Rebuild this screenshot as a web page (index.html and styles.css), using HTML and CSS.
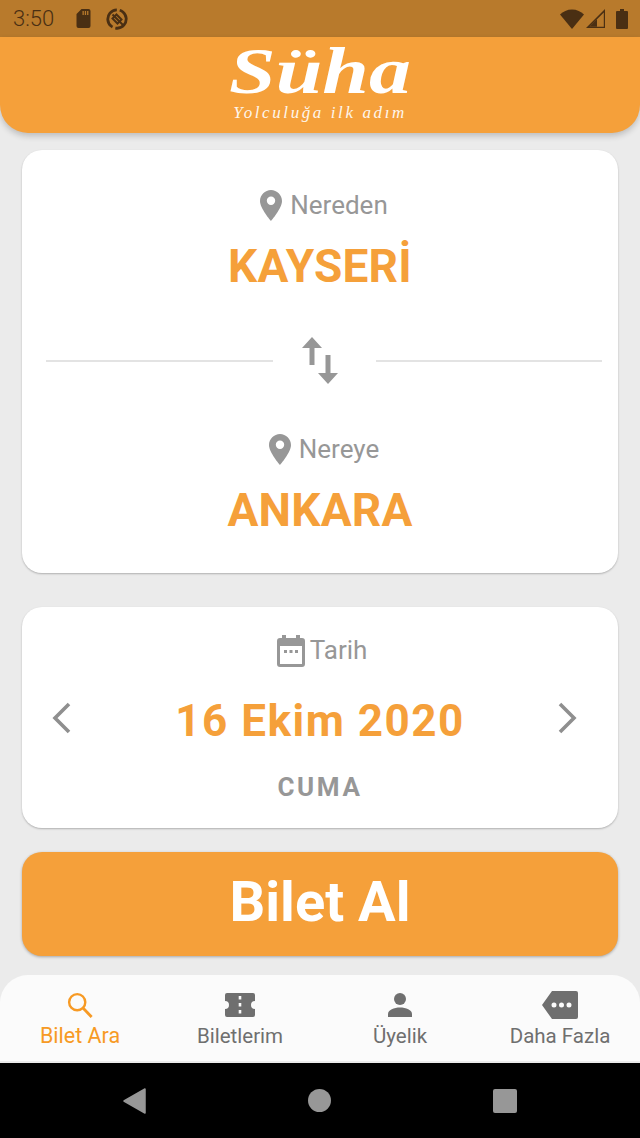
FILE: index.html
```html
<!DOCTYPE html>
<html lang="en">
<head>
    <meta charset="UTF-8">
    <meta name="viewport" content="width=device-width, initial-scale=1.0">
    <title>Süha</title>
    <link rel="stylesheet" href="styles.css">
</head>
<body>
<div class="screen">
    <!-- Status bar -->
    <div class="status-bar">
        <span class="status-time">3:50</span>
        <svg class="status-icon sd" viewBox="0 0 14 19"><path d="M5 0h7a2 2 0 0 1 2 2v15a2 2 0 0 1-2 2H2a2 2 0 0 1-2-2V5zM6 2v4h1.300V2zM8.300 2v4h1.300V2zM10.600 2v4h1.300V2z" fill-rule="evenodd"/></svg>
        <svg class="status-icon nosync" viewBox="0 0 22 22"><circle cx="11" cy="11" r="9.200" fill="none" stroke="#4a2f13" stroke-width="2.800" stroke-dasharray="24 2.900" transform="rotate(-50 11 11)"/><path d="M10.500 6.500 15.500 11.500 11.500 15.500 6.500 10.500z" fill="none" stroke="#4a2f13" stroke-width="2"/><path d="M6.500 6.500 18 18" stroke="#4a2f13" stroke-width="2"/></svg>
        <span class="status-spacer"></span>
        <svg class="status-icon wifi" viewBox="0 0 24 20"><path d="M0 5.500C3 2.500 7.200.500 12 .500s9 2 12 5L12 20z"/></svg>
        <svg class="status-icon signal" viewBox="0 0 19 19"><path d="M0 19 19 0v19zM3.500 17.800H17.800V3.600z" fill-rule="evenodd"/><path d="M3.500 17.800H11V10.300z"/></svg>
        <svg class="status-icon battery" viewBox="0 0 12 20"><path d="M4 0h4v2h3a1 1 0 0 1 1 1v16a1 1 0 0 1-1 1H1a1 1 0 0 1-1-1V3a1 1 0 0 1 1-1h3z"/></svg>
    </div>

    <!-- Orange header with logo -->
    <header class="app-header">
        <div class="logo-name">Süha</div>
        <div class="logo-tag">Yolculuğa ilk adım</div>
    </header>

    <main class="content">
        <section class="card route-card">
            <div class="field-label">
                <svg class="pin" viewBox="0 0 22 31"><path d="M11 0C5 0 0 5 0 11c0 7.500 11 20 11 20s11-12.500 11-20C22 5 17 0 11 0zm0 15a4.200 4.200 0 1 1 0-8.400 4.200 4.200 0 0 1 0 8.400z" fill-rule="evenodd"/></svg>
                <span>Nereden</span>
            </div>
            <div class="city">KAYSERİ</div>
            <div class="swap-row">
                <span class="rule"></span>
                <svg class="swap" viewBox="0 0 36 47"><path d="M10 0 20 11h-7.500v17h-5V11H0zM23.500 18h5v18H36L26 47 16 36h7.500z"/></svg>
                <span class="rule"></span>
            </div>
            <div class="field-label">
                <svg class="pin" viewBox="0 0 22 31"><path d="M11 0C5 0 0 5 0 11c0 7.500 11 20 11 20s11-12.500 11-20C22 5 17 0 11 0zm0 15a4.200 4.200 0 1 1 0-8.400 4.200 4.200 0 0 1 0 8.400z" fill-rule="evenodd"/></svg>
                <span>Nereye</span>
            </div>
            <div class="city">ANKARA</div>
        </section>

        <section class="card date-card">
            <div class="field-label date-label">
                <svg class="calendar" viewBox="0 0 28 32"><path d="M5 0h4v3h10V0h4v3h2a3 3 0 0 1 3 3v23a3 3 0 0 1-3 3H3a3 3 0 0 1-3-3V6a3 3 0 0 1 3-3h2zM3 11v18h22V11zM7 15h3v3H7zM12.500 15h3v3h-3zM18 15h3v3h-3z" fill-rule="evenodd"/></svg>
                <span>Tarih</span>
            </div>
            <div class="date-row">
                <svg class="chevron chevron-prev" viewBox="0 0 20 32"><path d="M18 2 4 16l14 14" fill="none" stroke="#8f8f8f" stroke-width="3.600"/></svg>
                <span class="date-text">16 Ekim 2020</span>
                <svg class="chevron chevron-next" viewBox="0 0 20 32"><path d="M2 2l14 14L2 30" fill="none" stroke="#8f8f8f" stroke-width="3.600"/></svg>
            </div>
            <div class="weekday">CUMA</div>
        </section>

        <button class="buy-button">Bilet Al</button>
    </main>

    <!-- Bottom tabs -->
    <nav class="tabs">
        <div class="tab active">
            <svg class="tab-icon" viewBox="0 0 28 28"><circle cx="11" cy="11" r="8.700" fill="none" stroke="#f79a24" stroke-width="2.600"/><path d="M17.500 17.500 26.500 27" stroke="#f79a24" stroke-width="3"/></svg>
            <span>Bilet Ara</span>
        </div>
        <div class="tab">
            <svg class="tab-icon" viewBox="0 0 30 26"><path d="M2 1h26a2 2 0 0 1 2 2v6a4 4 0 0 0 0 8v6a2 2 0 0 1-2 2H2a2 2 0 0 1-2-2v-6a4 4 0 0 0 0-8V3a2 2 0 0 1 2-2zM13.700 4v3.500h2.600V4zM13.700 11v3.500h2.600V11zM13.700 18v3.500h2.600V18z" fill-rule="evenodd"/></svg>
            <span>Biletlerim</span>
        </div>
        <div class="tab">
            <svg class="tab-icon" viewBox="0 0 26 26"><circle cx="13" cy="7" r="6"/><path d="M1 25v-3c0-4 6-6.500 12-6.500S25 18 25 22v3z"/></svg>
            <span>Üyelik</span>
        </div>
        <div class="tab">
            <svg class="tab-icon tag" viewBox="0 0 36 28"><path d="M10 0h24a2 2 0 0 1 2 2v24a2 2 0 0 1-2 2H10L0 14zM12 11.500a2.500 2.500 0 1 0 0 5 2.500 2.500 0 0 0 0-5zM19.500 11.500a2.500 2.500 0 1 0 0 5 2.500 2.500 0 0 0 0-5zM27 11.500a2.500 2.500 0 1 0 0 5 2.500 2.500 0 0 0 0-5z" fill-rule="evenodd"/></svg>
            <span>Daha Fazla</span>
        </div>
    </nav>

    <!-- Android navigation bar -->
    <div class="system-nav">
        <svg class="sys-back" viewBox="0 0 23 26"><path d="M22 1v24L1 13z" stroke="#979797" stroke-width="1.500" stroke-linejoin="round"/></svg>
        <span class="sys-home"></span>
        <span class="sys-recent"></span>
    </div>
</div>
</body>
</html>
```

FILE: styles.css
```css
/* General */
* {
    box-sizing: border-box;
}

body {
    margin: 0;
    background: #ebebeb;
    font-family: Roboto, sans-serif;
}

.screen {
    width: 640px;
    height: 1138px;
    display: flex;
    flex-direction: column;
    overflow: hidden;
}

/* Status bar */
.status-bar {
    height: 37px;
    flex: none;
    background: #b87a2c;
    display: flex;
    align-items: center;
    padding: 0 12px 0 13px;
    color: #4a2f13;
}

.status-time {
    font-size: 22px;
    font-weight: 300;
    margin-right: 22px;
}

.status-icon {
    display: block;
    fill: #4a2f13;
}

.sd {
    width: 15px;
    height: 19px;
    margin-right: 15px;
}

.nosync {
    width: 22px;
    height: 22px;
    fill: none;
}

.status-spacer {
    flex: 1;
}

.wifi {
    width: 24px;
    height: 20px;
    margin-right: 2px;
}

.signal {
    width: 19px;
    height: 19px;
    margin-right: 11px;
}

.battery {
    width: 12px;
    height: 20px;
}

/* Header */
.app-header {
    height: 96px;
    flex: none;
    background: #f5a03a;
    border-radius: 0 0 28px 28px;
    box-shadow: 0 3px 6px rgba(0, 0, 0, 0.2);
    color: #fff;
    text-align: center;
    padding-top: 4px;
}

.logo-name {
    font-family: "Liberation Serif", serif;
    font-style: italic;
    font-weight: bold;
    font-size: 66px;
    line-height: 60px;
    height: 62px;
    transform: scaleX(1.27);
}

.logo-tag {
    font-family: "Liberation Serif", serif;
    font-style: italic;
    font-size: 17px;
    line-height: 20px;
    letter-spacing: 2.6px;
    opacity: 0.9;
}

/* Main content */
.content {
    flex: 1;
    padding: 17px 22px 0;
}

.card {
    background: #fff;
    border-radius: 20px;
    box-shadow: 0 1px 2px rgba(0, 0, 0, 0.25);
    text-align: center;
}

.route-card {
    height: 423px;
    padding: 39px 24px 0;
}

.field-label {
    display: flex;
    justify-content: center;
    align-items: center;
    gap: 8px;
    height: 32px;
    padding-left: 8px;
    font-size: 26px;
    color: #979797;
}

.pin {
    width: 22px;
    height: 31px;
    fill: #979797;
}

.city {
    margin-top: 19px;
    font-size: 46px;
    line-height: 52px;
    font-weight: bold;
    letter-spacing: 0.2px;
    color: #f5a03a;
}

.swap-row {
    display: flex;
    align-items: center;
    height: 47px;
    margin: 45px -8px 49px 0;
}

.rule {
    flex: 1;
    height: 2px;
    background: #e3e3e3;
}

.swap {
    width: 36px;
    height: 47px;
    margin: 0 38px 0 29px;
    fill: #979797;
}

.date-card {
    height: 221px;
    margin-top: 34px;
    padding: 28px 31px 0;
}

.date-label {
    gap: 5px;
    padding-left: 4px;
}

.date-label span {
    margin-bottom: 2px;
}

.calendar {
    width: 28px;
    height: 32px;
    fill: #979797;
}

.date-row {
    display: grid;
    grid-template-columns: 1fr auto 1fr;
    align-items: center;
    height: 62px;
    margin-top: 23px;
}

.chevron {
    width: 20px;
    height: 32px;
    margin-bottom: 6px;
}

.chevron-prev {
    margin-left: -2px;
}

.chevron-next {
    justify-self: end;
    margin-right: 9px;
}

.date-text {
    font-size: 44px;
    font-weight: bold;
    letter-spacing: 1.5px;
    color: #f5a03a;
}

.weekday {
    margin-top: 20px;
    font-size: 26px;
    line-height: 30px;
    font-weight: bold;
    letter-spacing: 2.6px;
    color: #979797;
}

.buy-button {
    display: block;
    width: 100%;
    height: 104px;
    margin-top: 24px;
    padding: 0 0 4px;
    border: none;
    border-radius: 20px;
    background: #f5a03a;
    box-shadow: 0 1px 3px rgba(0, 0, 0, 0.3);
    color: #fff;
    font-family: Roboto, sans-serif;
    font-size: 56px;
    font-weight: bold;
}

/* Bottom tabs */
.tabs {
    height: 86px;
    margin-bottom: 2px;
    flex: none;
    background: #fbfbfb;
    border-radius: 28px 28px 0 0;
    display: grid;
    grid-template-columns: repeat(4, 1fr);
}

.tab {
    display: flex;
    flex-direction: column;
    align-items: center;
    padding-top: 17px;
    font-size: 20.500px;
    line-height: 24px;
    color: #6f6f6f;
}

.tab.active {
    font-size: 21.500px;
    color: #f79a24;
}

.tab-icon {
    width: 30px;
    height: 26px;
    margin-bottom: 6px;
    fill: #6f6f6f;
}

.tag {
    width: 36px;
    height: 28px;
    margin: -1px 0 5px;
}

/* System navigation */
.system-nav {
    height: 75px;
    flex: none;
    background: #000;
    display: flex;
    justify-content: center;
    align-items: center;
    gap: 162px;
}

.sys-back {
    width: 23px;
    height: 26px;
    fill: #979797;
}

.sys-home {
    width: 23px;
    height: 23px;
    border-radius: 50%;
    background: #979797;
}

.sys-recent {
    width: 24px;
    height: 24px;
    border-radius: 2px;
    background: #979797;
}
```
